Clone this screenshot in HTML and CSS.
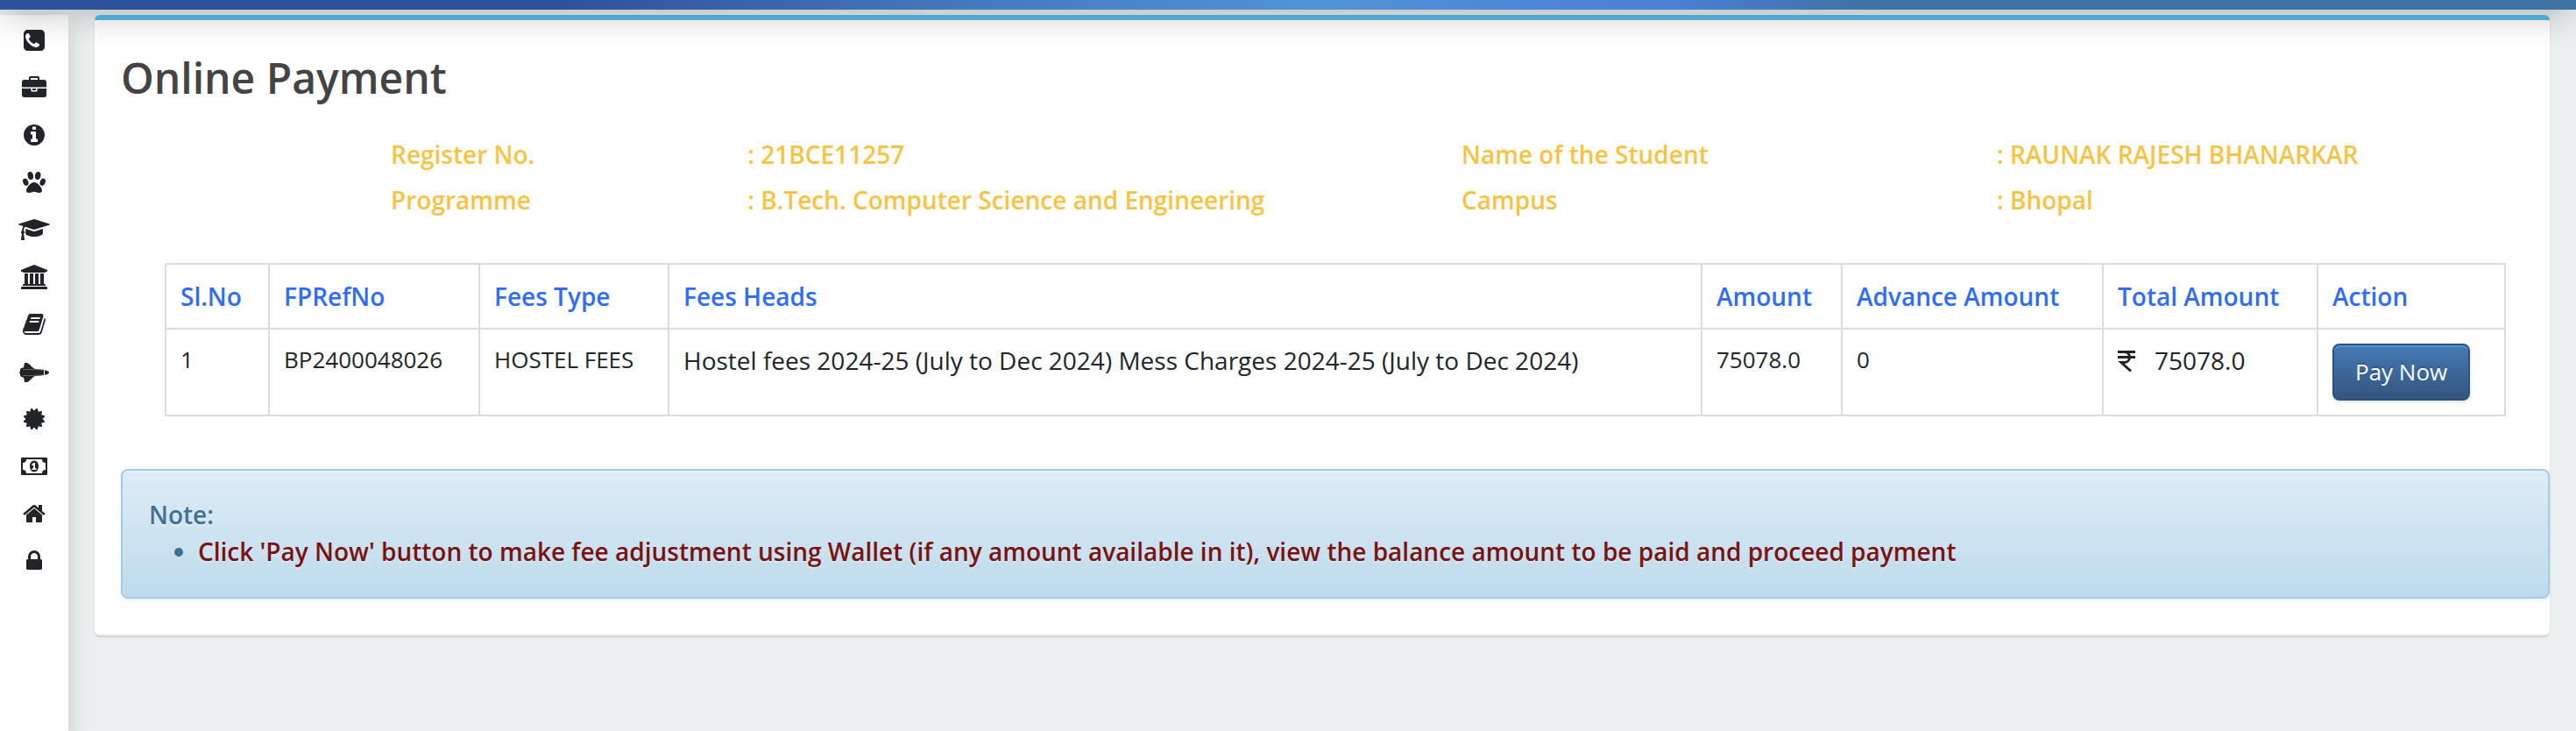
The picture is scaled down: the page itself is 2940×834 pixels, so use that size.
FILE: index.html
```html
<!DOCTYPE html>
<html lang="en">
<head>
<meta charset="utf-8">
<title>Online Payment</title>
<link rel="stylesheet" href="styles.css">
</head>
<body>
<header class="topbar"></header>
<div class="shell">
  <nav class="sidebar" aria-label="Main menu">
    <a href="#" aria-label="Contact"><svg width="28" height="28" viewBox="0 0 1792 1792"><path d="M1280 1193q0-11-2-16-3-8-38.5-29.5t-88.5-49.5l-53-29q-5-3-19-13t-25-15-21-5q-18 0-47 32.5t-57 65.5-44 33q-7 0-16.5-3.5t-15.5-6.5-17-9.5-14-8.500q-99-55-170.500-126.500t-126.500-170.500q-2-3-8.500-14t-9.500-17-6.500-15.500-3.500-16.500q0-13 20.500-33.500t45-38.500 45-39.500 20.500-36.500q0-10-5-21t-15-25-13-19q-3-6-15-28.500t-25-45.500-26.500-47.500-25-40.500-16.500-18-16-2q-48 0-101 22-46 21-80 94.500t-34 130.500q0 16 2.500 34t5 30.500 9 33 10 29.500 12.500 33 11 30q60 164 216.500 320.500t320.500 216.500q6 2 30 11t33 12.500 29.500 10 33 9 30.500 5 34 2.500q57 0 130.500-34t94.500-80q22-53 22-101zm384-777v960q0 119-84.500 203.500t-203.500 84.500h-960q-119 0-203.500-84.500t-84.500-203.500v-960q0-119 84.500-203.500t203.500-84.500h960q119 0 203.500 84.500t84.500 203.500z"/></svg></a>
    <a href="#" aria-label="Services"><svg width="28" height="28" viewBox="0 0 1792 1792"><path d="M640 320h512v-128h-512v128zm1152 640v480q0 66-47 113t-113 47h-1472q-66 0-113-47t-47-113v-480h672v160q0 26 19 45t45 19h320q26 0 45-19t19-45v-160h672zm-768 0v128h-256v-128h256zm768-480v384h-1792v-384q0-66 47-113t113-47h352v-160q0-40 28-68t68-28h576q40 0 68 28t28 68v160h352q66 0 113 47t47 113z"/></svg></a>
    <a href="#" aria-label="Information"><svg width="28" height="28" viewBox="0 0 1792 1792"><path d="M1152 1376v-160q0-14-9-23t-23-9h-96v-512q0-14-9-23t-23-9h-320q-14 0-23 9t-9 23v160q0 14 9 23t23 9h96v320h-96q-14 0-23 9t-9 23v160q0 14 9 23t23 9h448q14 0 23-9t9-23zm-128-896v-160q0-14-9-23t-23-9h-192q-14 0-23 9t-9 23v160q0 14 9 23t23 9h192q14 0 23-9t9-23zm640 416q0 209-103 385.500t-279.500 279.500-385.500 103-385.500-103-279.500-279.500-103-385.500 103-385.500 279.500-279.500 385.500-103 385.500 103 279.500 279.500 103 385.500z"/></svg></a>
    <a href="#" aria-label="Proctor"><svg width="26" height="28" viewBox="0 0 26 28"><ellipse cx="8.800" cy="6.500" rx="3.200" ry="4.600" transform="rotate(-10 8.800 6.500)"/><ellipse cx="17.200" cy="6.500" rx="3.200" ry="4.600" transform="rotate(10 17.200 6.500)"/><ellipse cx="3.300" cy="13.700" rx="3" ry="4.300" transform="rotate(-20 3.300 13.700)"/><ellipse cx="22.700" cy="13.700" rx="3" ry="4.300" transform="rotate(20 22.700 13.700)"/><path d="M13 14c4 0 9 6 9 9.300 0 2.200-1.500 2.700-3 2.700-2.300 0-4-1.300-6-1.300S9.200 26 7 26c-1.700 0-3-.6-3-2.700C4 20 9 14 13 14z"/></svg></a>
    <a href="#" aria-label="Academics"><svg width="36" height="28" viewBox="0 0 2304 1792"><path d="M1774 836l18 316q4 69-82 128t-235 93.500-323 34.500-323-34.500-235-93.500-82-128l18-316 574 181q22 7 48 7t48-7zm530-324q0 23-22 31l-1120 352q-4 1-10 1t-10-1l-652-206q-43 34-71 111.500t-34 178.500q63 36 63 109 0 69-58 107l58 433q2 14-8 25-9 11-24 11h-192q-15 0-24-11-10-11-8-25l58-433q-58-38-58-107 0-73 65-111 11-207 98-330l-333-104q-22-8-22-31t22-31l1120-352q4-1 10-1t10 1l1120 352q22 8 22 31z"/></svg></a>
    <a href="#" aria-label="Institution"><svg width="30" height="28" viewBox="0 0 1920 1792"><path d="M960 0l960 384v128h-128q0 26-20.500 45t-48.500 19h-1526q-28 0-48.500-19t-20.500-45h-128v-128zm-704 640h256v768h128v-768h256v768h128v-768h256v768h128v-768h256v768h59q28 0 48.500 19t20.500 45v64h-1664v-64q0-26 20.500-45t48.500-19h59v-768zm1595 960q28 0 48.500 19t20.500 45v128h-1920v-128q0-26 20.500-45t48.500-19h1782z"/></svg></a>
    <a href="#" aria-label="Library"><svg width="28" height="28" viewBox="0 0 1792 1792"><path d="M1703 478q40 57 18 129l-275 906q-19 64-76.500 107.500t-122.500 43.500h-923q-77 0-148.500-53.500t-99.500-131.500q-24-67-2-127 0-4 3-27t4-37q1-8-3-21.500t-3-19.500q2-11 8-21t16.500-23.500 16.500-23.500q23-38 45-91.500t30-91.500q3-10 .5-30t-.5-28q3-11 17-28t17-23q21-36 42-92t25-90q1-9-2.500-32t.5-28q4-13 22-30.500t22-22.500q19-26 42.500-84.500t27.500-96.500q1-8-3-25.500t-2-26.500q2-8 9-18t18-23 17-21q8-12 16.500-30.500t15-35 16-36 19.500-32 26.500-23.500 36-11.500 47.500 5.500l-1 3q38-9 51-9h761q74 0 114 56t18 130l-274 906q-36 119-71.500 153.500t-128.500 34.500h-869q-27 0-38 15-11 16-1 43 24 70 144 70h923q29 0 56-15.500t35-41.500l300-987q7-22 5-57 38 15 59 43zm-1064 2q-4 13 2 22.500t20 9.500h608q13 0 25.500-9.500t16.500-22.500l21-64q4-13-2-22.500t-20-9.500h-608q-13 0-25.500 9.500t-16.500 22.500zm-83 256q-4 13 2 22.500t20 9.500h608q13 0 25.500-9.500t16.500-22.500l21-64q4-13-2-22.500t-20-9.500h-608q-13 0-25.500 9.500t-16.500 22.500z"/></svg></a>
    <a href="#" aria-label="Events"><svg width="34" height="28" viewBox="0 0 34 28"><path d="M0 14.300h1V11.500c1-1.500 2.500-2 4-2.200L6 4h2.500c2.500 0 4.500 4 9 6.800L28 12v6l-10.500 1.200C13 22 11 26 8.500 26H6l-1-5.300c-1.500-.2-3-.7-4-2.200v-2.800H0zM29 12.200c2.500.4 5 1.300 5 2.800s-2.500 2.400-5 2.800z"/><path class="seam" d="M4 11.500h13l10 .8M4 18.500h13l10-.8"/></svg></a>
    <a href="#" aria-label="Certificates"><svg width="28" height="28" viewBox="0 0 1792 1792"><path d="M1504 896l138 135q30 28 20 70-12 41-52 51l-188 48 53 186q12 41-19 70-29 31-70 19l-186-53-48 188q-10 40-51 52-12 2-19 2-31 0-51-22l-135-138-135 138q-28 30-70 20-41-11-51-52l-48-188-186 53q-41 12-70-19-31-29-19-70l53-186-188-48q-40-10-52-51-10-42 20-70l138-135-138-135q-30-28-20-70 12-41 52-51l188-48-53-186q-12-41 19-70 29-31 70-19l186 53 48-188q10-41 51-51 41-12 70 19l135 139 135-139q29-30 70-19 41 10 51 51l48 188 186-53q41-12 70 19 31 29 19 70l-53 186 188 48q40 10 52 51 10 42-20 70z"/></svg></a>
    <a href="#" aria-label="Payments"><svg width="30" height="28" viewBox="0 0 30 28"><path fill-rule="evenodd" d="M1 4h28q1 0 1 1v18q0 1-1 1H1q-1 0-1-1V5q0-1 1-1zm5 2q0 4-4 4v8q4 0 4 4h18q0-4 4-4v-8q-4 0-4-4z"/><path fill-rule="evenodd" d="M15 7.500c3.300 0 5 3 5 6.500s-1.700 6.500-5 6.500-5-3-5-6.500 1.700-6.500 5-6.500zM14.300 10L12 12l1 1.300 1-.8V16.500h-1.700V18h5.400v-1.500H16V10z"/></svg></a>
    <a href="#" aria-label="Hostel"><svg width="28" height="28" viewBox="0 0 1792 1792"><path d="M1472 992v480q0 26-19 45t-45 19h-384v-384h-256v384h-384q-26 0-45-19t-19-45v-480q0-1 .5-3t.5-3l575-474 575 474q1 2 1 6zm223-69l-62 74q-8 9-21 11h-3q-13 0-21-7l-692-577-692 577q-12 8-24 7-13-2-21-11l-62-74q-8-10-7-23.500t11-21.500l719-599q32-26 76-26t76 26l244 204v-195q0-14 9-23t23-9h192q14 0 23 9t9 23v408l219 182q10 8 11 21.500t-7 23.500z"/></svg></a>
    <a href="#" aria-label="Account"><svg width="28" height="28" viewBox="0 0 1792 1792"><path d="M640 768h512v-192q0-106-75-181t-181-75-181 75-75 181v192zm832 96v576q0 40-28 68t-68 28h-960q-40 0-68-28t-28-68v-576q0-40 28-68t68-28h32v-192q0-184 132-316t316-132 316 132 132 316v192h32q40 0 68 28t28 68z"/></svg></a>
  </nav>
  <main class="content">
    <section class="card">
      <h1 class="title">Online Payment</h1>
      <dl class="info">
        <dt>Register No.</dt><dd>: 21BCE11257</dd>
        <dt>Name of the Student</dt><dd>: RAUNAK RAJESH BHANARKAR</dd>
        <dt>Programme</dt><dd>: B.Tech. Computer Science and Engineering</dd>
        <dt>Campus</dt><dd>: Bhopal</dd>
      </dl>
      <div class="table-wrap">
        <table class="fees">
          <colgroup><col class="c-sl"><col class="c-ref"><col class="c-type"><col><col class="c-amt"><col class="c-adv"><col class="c-tot"><col class="c-act"></colgroup>
          <thead>
            <tr><th>Sl.No</th><th>FPRefNo</th><th>Fees Type</th><th>Fees Heads</th><th>Amount</th><th>Advance Amount</th><th>Total Amount</th><th>Action</th></tr>
          </thead>
          <tbody>
            <tr><td>1</td><td>BP2400048026</td><td>HOSTEL FEES</td><td class="large">Hostel fees 2024-25 (July to Dec 2024) Mess Charges 2024-25 (July to Dec 2024)</td><td>75078.0</td><td>0</td><td class="large"><span class="total"><svg width="20" height="28" viewBox="0 0 20 28" role="img" aria-label="Rupees"><path d="M0 4.500h20M0 10.500h20M4 4.500h3.500c8 0 8 12 0 12H4l11 10"/></svg>75078.0</span></td><td><button type="button" class="pay">Pay Now</button></td></tr>
          </tbody>
        </table>
      </div>
      <div class="note">
        <div>Note:</div>
        <ul><li><span>Click 'Pay Now' button to make fee adjustment using Wallet (if any amount available in it), view the balance amount to be paid and proceed payment</span></li></ul>
      </div>
    </section>
  </main>
</div>
</body>
</html>
```
FILE: styles.css
```css
* { box-sizing: border-box; }

body {
  margin: 0;
  min-height: 100vh;
  display: flex;
  flex-direction: column;
  background: #ebefef;
  color: #212529;
  font-family: "Open Sans", "Noto Sans", sans-serif;
  font-size: 26px;
  line-height: 40px;
}

.topbar {
  position: relative;
  height: 11px;
  background: linear-gradient(90deg, #2f529c 0%, #2f529c 22%, #4173b8 35%, #5094d8 51%, #4a7fd4 65%, #3d72a2 73%, #3d72a2 100%);
}

/* soft shade that the bar casts over the page */
.topbar::after {
  content: "";
  position: absolute;
  top: 100%;
  left: 0;
  right: 0;
  height: 44px;
  background: linear-gradient(rgba(0, 0, 0, .14), rgba(0, 0, 0, .07) 35%, rgba(0, 0, 0, .02) 70%, transparent);
  -webkit-mask-image: linear-gradient(90deg, rgba(0, 0, 0, .4), #000 30px, #000 calc(100% - 30px), rgba(0, 0, 0, .4));
  mask-image: linear-gradient(90deg, rgba(0, 0, 0, .4), #000 30px, #000 calc(100% - 30px), rgba(0, 0, 0, .4));
  pointer-events: none;
  z-index: 2;
}

.shell {
  flex: 1;
  display: flex;
  padding-top: 6px;
  overflow: hidden;
}

.sidebar {
  flex: none;
  width: 78px;
  padding-top: 15px;
  display: flex;
  flex-direction: column;
  align-items: center;
  gap: 26px;
  background: #fff;
  box-shadow: 0 16px 28px rgba(0, 0, 0, .15);
}

.sidebar a { display: flex; color: #212529; }
.sidebar svg { fill: currentColor; }
.seam { fill: none; stroke: #888; stroke-width: .6; }

.content {
  flex: 1;
  min-width: 0;
  padding: 0 30px;
}

.card {
  position: relative;
  padding: 32px 0 40px 30px;
  background: #fff;
  border-top: 6px solid #57bde9;
  border-bottom: 2px solid #f4f4f4;
  border-radius: 6px;
  box-shadow: 0 2px 2px rgba(0, 0, 0, .12);
}

.title {
  margin: 0;
  color: #444;
  font-size: 48px;
  font-weight: 600;
  line-height: 68px;
}

.info {
  display: grid;
  grid-template-columns: 2fr 4fr 3fr 3fr;
  margin: 27px 20px 0 308px;
  color: #f6c344;
  font-size: 28px;
  font-weight: 600;
  line-height: 52px;
}

.info dd { margin: 0; }

.table-wrap { margin: 46px 50px 60px 50px; }

.fees {
  width: 100%;
  table-layout: fixed;
  border-collapse: collapse;
}

.c-sl { width: 118px; }
.c-ref { width: 240px; }
.c-type { width: 216px; }
.c-amt { width: 160px; }
.c-adv { width: 298px; }
.c-tot { width: 245px; }
.c-act { width: 214px; }

.fees th,
.fees td {
  padding: 16px;
  border: 2px solid #dcdcdc;
  text-align: left;
  vertical-align: top;
}

.fees th {
  color: #2f6df6;
  font-size: 28px;
  font-weight: 600;
}

.fees td { line-height: 36px; }
.fees .large { font-size: 28px; line-height: 38px; }

.total {
  display: flex;
  align-items: center;
  gap: 22px;
}

.total svg { fill: none; stroke: currentColor; stroke-width: 3; }

.fees .pay {
  display: block;
  padding: 12px 24px;
  border: 2px solid #2b5480;
  border-radius: 8px;
  background: linear-gradient(#457ab5, #34557f);
  box-shadow: inset 0 2px 0 rgba(255, 255, 255, .15), 0 2px 4px rgba(0, 0, 0, .12);
  color: #fff;
  font: inherit;
  line-height: 37px;
  text-shadow: 0 -2px 0 rgba(0, 0, 0, .2);
}

.note {
  padding: 29px 30px 31px;
  border: 2px solid #a3cce8;
  border-radius: 8px;
  background: linear-gradient(#deecf6, #bedbed);
  box-shadow: inset 0 2px 0 rgba(255, 255, 255, .25), 0 2px 4px rgba(0, 0, 0, .06);
  color: #43708f;
  font-size: 28px;
  font-weight: 600;
  line-height: 42px;
  text-shadow: 0 2px 0 rgba(255, 255, 255, .3);
}

.note ul { margin: 0; padding-left: 56px; }
.note li span { color: #7a120f; }
```
